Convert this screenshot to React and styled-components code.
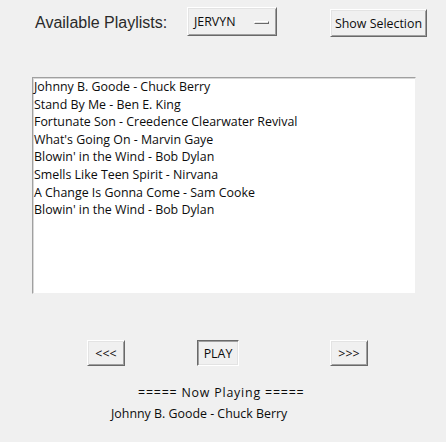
import React from 'react'
import styled, { createGlobalStyle } from 'styled-components'

const GlobalStyle = createGlobalStyle`
  html, body {
    margin: 0;
    padding: 0;
    background: #f0f0f0;
  }
`;

const Window = styled.div`
  width: 446px;
  height: 442px;
  background: #f0f0f0;
  font-family: "Open Sans", "Noto Sans", sans-serif;
  font-size: 12.4px;
  color: #0c0c0c;
  display: flex;
  flex-direction: column;
  box-sizing: border-box;
`;

const TopBar = styled.div`
  display: flex;
  align-items: flex-start;
  padding: 7px 0 0 35px;
  height: 30px;
`;

const Heading = styled.div`
  font-family: "Liberation Sans", Arial, sans-serif;
  font-size: 16px;
  color: #2a2a2a;
  line-height: 18px;
  margin-top: 7px;
  width: 152px;
`;

const Button = styled.div`
  box-sizing: border-box;
  display: flex;
  align-items: center;
  justify-content: ${p => (p.$left ? 'flex-start' : 'center')};
  width: ${p => p.$w}px;
  height: ${p => p.$h || 26}px;
  margin-left: ${p => p.$ml || 0}px;
  margin-top: ${p => p.$mt || 0}px;
  padding: 0 0 0 ${p => p.$pl || 0}px;
  background: #f0f0f0;
  color: #0c0c0c;
  border-style: solid;
  border-width: 1px;
  border-color: ${p => (p.$sunken ? '#696969 #ffffff #ffffff #696969' : '#ffffff #696969 #696969 #ffffff')};
  box-shadow: ${p => (p.$sunken
    ? 'inset 1px 1px 0 #a0a0a0, inset -1px -1px 0 #e3e3e3'
    : 'inset 1px 1px 0 #e3e3e3, inset -1px -1px 0 #a0a0a0')};
  white-space: nowrap;
`;

const Indicator = styled.span`
  display: block;
  width: 15px;
  height: 3px;
  margin-left: 18px;
  margin-top: 2px;
  box-sizing: border-box;
  border: 1px solid;
  border-color: #ffffff #696969 #696969 #ffffff;
  background: #e3e3e3;
`;

const ListBox = styled.div`
  box-sizing: border-box;
  width: 384px;
  height: 217px;
  margin: 40px 0 0 32px;
  background: #ffffff;
  border-style: solid;
  border-width: 1px;
  border-color: #a0a0a0 #f0f0f0 #f0f0f0 #a0a0a0;
  box-shadow: inset 1px 1px 0 #d8d8d8;
  padding: 0 0 0 1px;
`;

const Item = styled.div`
  line-height: 17.6px;
  white-space: nowrap;
`;

const Controls = styled.div`
  display: flex;
  margin-top: 46px;
  padding-left: 87px;
`;

const NowPlaying = styled.div`
  display: flex;
  flex-direction: column;
  margin-top: 16px;
`;

const Line = styled.div`
  padding-left: ${p => p.$indent}px;
  letter-spacing: ${p => p.$spread || 0}px;
  line-height: 21px;
  white-space: nowrap;
`;

const songs = [
  'Johnny B. Goode - Chuck Berry',
  'Stand By Me - Ben E. King',
  'Fortunate Son - Creedence Clearwater Revival',
  "What's Going On - Marvin Gaye",
  "Blowin' in the Wind - Bob Dylan",
  'Smells Like Teen Spirit - Nirvana',
  'A Change Is Gonna Come - Sam Cooke',
  "Blowin' in the Wind - Bob Dylan",
];

const App = () => {
  return (
    <Window>
      <GlobalStyle />
      <TopBar>
        <Heading>Available Playlists:</Heading>
        <Button $w={90} $h={29} $left $pl={6}>
          JERVYN
          <Indicator />
        </Button>
        <Button $w={97} $h={28} $ml={53} $mt={2}>Show Selection</Button>
      </TopBar>
      <ListBox>
        {songs.map((s, i) => (
          <Item key={i}>{s}</Item>
        ))}
      </ListBox>
      <Controls>
        <Button $w={38}>&lt;&lt;&lt;</Button>
        <Button $w={42} $ml={72} $sunken>PLAY</Button>
        <Button $w={38} $ml={91}>&gt;&gt;&gt;</Button>
      </Controls>
      <NowPlaying>
        <Line $indent={138} $spread={0.8}>===== Now Playing =====</Line>
        <Line $indent={111}>Johnny B. Goode - Chuck Berry</Line>
      </NowPlaying>
    </Window>
  )
}

export default App
